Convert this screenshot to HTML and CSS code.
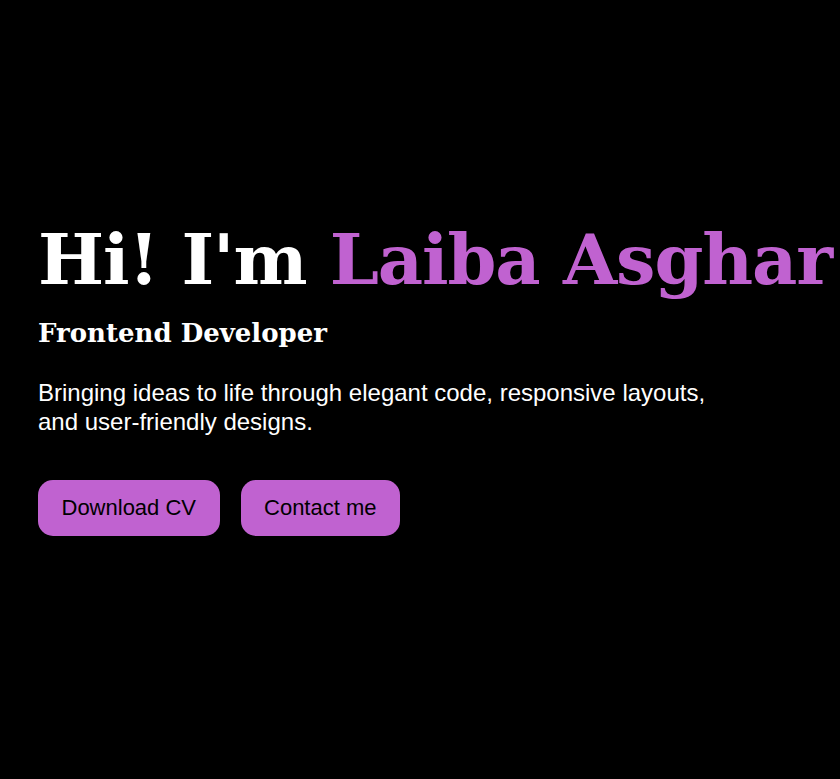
FILE: index.html
```html
<!DOCTYPE html>
<html lang="en">
<head>
<meta charset="utf-8">
<title>Laiba Asghar</title>
<link rel="stylesheet" href="styles.css">
</head>
<body>
<section class="hero">
  <div class="hero-content">
    <h1 class="title">Hi! I'm <span class="accent">Laiba Asghar</span></h1>
    <h2 class="subtitle">Frontend Developer</h2>
    <p class="lead">Bringing ideas to life through elegant code, responsive layouts, and user-friendly designs.</p>
    <div class="actions">
      <a class="btn" href="#">Download CV</a>
      <a class="btn" href="#">Contact me</a>
    </div>
  </div>
</section>
</body>
</html>
```
FILE: styles.css
```css
html, body {
  margin: 0;
  padding: 0;
  background: #000;
  overflow: hidden;
}
.hero {
  height: 779px;
  padding: 221px 0 0 38px;
  box-sizing: border-box;
}
.hero-content {
  display: flex;
  flex-direction: column;
}
.title {
  margin: 0;
  font-family: Georgia, "DejaVu Serif", serif;
  font-weight: bold;
  font-size: 70px;
  letter-spacing: -1.1px;
  line-height: 1.1;
  color: #fff;
  white-space: nowrap;
}
.accent {
  color: #c062d0;
}
.subtitle {
  margin: 20px 0 0;
  font-family: Georgia, "DejaVu Serif", serif;
  font-weight: bold;
  font-size: 26px;
  color: #fff;
}
.lead {
  margin: 30px 0 0;
  max-width: 690px;
  font-family: "Liberation Sans", Arial, sans-serif;
  font-size: 24px;
  line-height: 29px;
  color: #fff;
}
.actions {
  display: flex;
  gap: 21px;
  margin-top: 44px;
}
.btn {
  display: inline-flex;
  align-items: center;
  height: 56px;
  padding: 0 23.5px;
  background: #c062d0;
  color: #000;
  border-radius: 15px;
  font-family: "Liberation Sans", Arial, sans-serif;
  font-size: 22px;
  text-decoration: none;
}
```
